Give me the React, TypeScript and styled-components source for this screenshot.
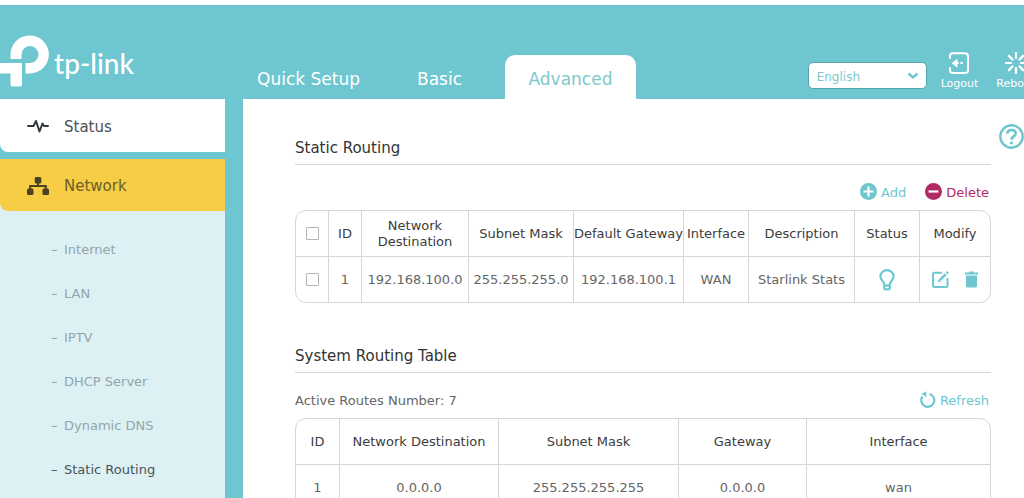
import React from "react";
import styled, { createGlobalStyle } from "styled-components";

const teal = "#6ec7d0";
const line = "#d6d6d6";

const GlobalStyle = createGlobalStyle`
  *, *::before, *::after { box-sizing: border-box; }
  html { overflow-x: hidden; scrollbar-width: none; }
  body {
    margin: 0;
    background: #fff;
    color: #666;
    font-family: "DejaVu Sans", Verdana, sans-serif;
    font-size: 13px;
    line-height: 16px;
  }
  button { font: inherit; color: inherit; background: none; border: 0; padding: 0; cursor: pointer; }
  a { color: inherit; text-decoration: none; }
  svg { display: block; flex: none; }
`;

const Shell = styled.div`
  display: flex;
  flex-direction: column;
  min-width: 1035px;
  min-height: 100vh;
  background: ${teal};
  border-top: 5px solid #fff;
`;

const Header = styled.header`
  display: flex;
  align-items: flex-end;
  height: 94px;
  color: #fff;
`;

const Brand = styled.a`
  display: flex;
  align-items: flex-start;
  width: 243px;
  height: 64px;
`;

const BrandName = styled.span`
  margin-left: 4px;
  padding-top: 12px;
  font-family: Lato, sans-serif;
  font-size: 28px;
  font-weight: 500;
  line-height: 32px;
`;

const Tabs = styled.nav`
  display: flex;
`;

const Tab = styled.a<{ $active?: boolean }>`
  width: 131px;
  height: 44px;
  padding-top: 2px;
  border-radius: 10px 10px 0 0;
  background: ${(p) => (p.$active ? "#fff" : "transparent")};
  color: ${(p) => (p.$active ? "#7dc8cb" : "#fff")};
  font-size: 17px;
  line-height: 44px;
  text-align: center;
  white-space: nowrap;
`;

const Tools = styled.div`
  display: flex;
  align-items: flex-end;
  margin-left: auto;
  padding-bottom: 7px;
`;

const Language = styled.label`
  position: relative;
  display: block;
  margin: 0 14px 3px 0;
  svg { position: absolute; right: 8px; top: 10px; pointer-events: none; }
`;

const Select = styled.select`
  display: block;
  appearance: none;
  width: 119px;
  height: 27px;
  padding: 2px 8px 0;
  border: 1px solid #55a5b0;
  border-radius: 5px;
  background: #fff;
  color: #7dc8cb;
  font: 12px "DejaVu Sans", Verdana, sans-serif;
`;

const Tool = styled.button`
  display: flex;
  flex-direction: column;
  align-items: center;
  gap: 2px;
  font-size: 11px;
  & + & { margin-left: 18px; }
`;

const Body = styled.div`
  display: flex;
  flex: 1;
  gap: 18px;
`;

const Sidebar = styled.nav`
  display: flex;
  flex-direction: column;
  width: 225px;
  flex: none;
`;

const NavItem = styled.a<{ $active?: boolean }>`
  display: flex;
  align-items: center;
  gap: 15px;
  height: ${(p) => (p.$active ? "52px" : "53px")};
  padding: 2px 0 0 27px;
  border-radius: 0 0 0 8px;
  background: ${(p) => (p.$active ? "#f6cd45" : "#fff")};
  color: ${(p) => (p.$active ? "#6a5e28" : "#4b5055")};
  font-size: 15px;
`;

const NavGroup = styled.div`
  flex: 1;
  margin-top: 7px;
  background: #ddf1f5;
`;

const SubList = styled.ul`
  margin: 0;
  padding: 17px 0 16px;
  list-style: none;
`;

const SubItem = styled.a<{ $active?: boolean }>`
  display: flex;
  gap: 6px;
  padding: 14px 0 14px 51px;
  color: ${(p) => (p.$active ? "#485459" : "#92a5aa")};
  &::before { content: "–"; width: 7px; }
`;

const Main = styled.main`
  display: flex;
  flex: 1;
  min-width: 0;
  align-items: flex-start;
  gap: 8px;
  padding: 0 11px 0 52px;
  background: #fff;
`;

const Content = styled.div`
  flex: 1;
  min-width: 0;
  padding-top: 36px;
`;

const Section = styled.section`
  margin-bottom: 40px;
`;

const Title = styled.h2`
  margin: 0;
  padding: 1px 0 4px;
  border-bottom: 1px solid ${line};
  color: #333;
  font-size: 15px;
  font-weight: 400;
  line-height: 24px;
`;

const Bar = styled.div`
  display: flex;
  align-items: center;
  height: 45px;
  padding: 10px 2px 0 0;
`;

const Actions = styled.div`
  display: flex;
  gap: 19px;
  margin-left: auto;
`;

const Action = styled.button<{ $danger?: boolean }>`
  display: flex;
  align-items: center;
  gap: 4px;
  color: ${(p) => (p.$danger ? "#b02a66" : teal)};
  svg { margin-bottom: 2px; }
`;

const Table = styled.table`
  width: 100%;
  table-layout: fixed;
  border-collapse: separate;
  border-spacing: 0;
  border: 1px solid ${line};
  border-radius: 11px;
  th, td {
    height: 46px;
    padding: 0;
    border-right: 1px solid ${line};
    text-align: center;
    font-weight: 400;
  }
  th { color: #3c3c3c; }
  th:last-child, td:last-child { border-right: 0; }
  thead th { border-bottom: 1px solid ${line}; }
  tbody td { height: 45px; }
`;

const NoWrap = styled.span`
  display: flex;
  justify-content: center;
  white-space: nowrap;
`;

const Check = styled.input`
  display: block;
  appearance: none;
  width: 13px;
  height: 13px;
  margin: 0 auto;
  border: 1px solid #b5b5b5;
  border-radius: 1px;
  background: #fff;
  &:checked { background: ${teal}; }
`;

const Icons = styled.div`
  display: flex;
  justify-content: center;
  align-items: center;
  gap: 16px;
  color: ${teal};
`;

const Help = styled.button`
  margin-top: 25px;
  color: ${teal};
`;

const LogoMark = () => (
  <svg width="50" height="52" viewBox="0 0 50 52" fill="#fff" aria-hidden="true">
    <path d="M10.5 24V20A19.200 19 0 1 1 29.500 38.500H25.500V28H29.500A8.500 8.500 0 1 0 21.500 19.500V24Z" />
    <path d="M0 28H22V50Q22 51.500 20.500 51.500H12Q10.500 51.500 10.500 50V38.500H0Z" />
  </svg>
);

const Pulse = () => (
  <svg width="22" height="16" viewBox="0 0 22 16" fill="none" stroke="#33383d" strokeWidth="2" strokeLinejoin="round" strokeLinecap="round" aria-hidden="true">
    <path d="M1 7H6.500L9 2L12.500 12.500L15.500 4.500L17 7H21" />
  </svg>
);

const NetworkIcon = () => (
  <svg width="22" height="18" viewBox="0 0 22 18" fill="#4a4220" aria-hidden="true">
    <rect x="7.700" y="0" width="6.600" height="6.500" rx="1.500" />
    <rect x="0" y="11.500" width="6.500" height="6.500" rx="1.500" />
    <rect x="15.500" y="11.500" width="6.500" height="6.500" rx="1.500" />
    <path d="M11 5V9M3.200 12V9H18.800V12" fill="none" stroke="#4a4220" strokeWidth="2" />
  </svg>
);

const LogoutIcon = () => (
  <svg width="22" height="22" viewBox="0 0 22 22" fill="none" stroke="#fff" strokeWidth="2" strokeLinecap="round" aria-hidden="true">
    <path d="M2 6V4Q2 1.200 4.800 1.200H17Q20 1.200 20 4.200V18Q20 21 17 21H4.800Q2 21 2 18V16" />
    <path d="M8 11H10M13.200 11H14" />
    <path d="M4.500 11L9 7.500V14.500Z" fill="#fff" strokeWidth="1" strokeLinejoin="round" />
  </svg>
);

const RebootIcon = () => (
  <svg width="22" height="22" viewBox="0 0 22 22" stroke="#fff" strokeWidth="2.200" strokeLinecap="round" aria-hidden="true">
    <path d="M11 1V6M11 16V21M1 11H6M16 11H21M3.900 3.900L7.500 7.500M14.500 14.500L18.100 18.100M3.900 18.100L7.500 14.500M14.500 7.500L18.100 3.900" />
  </svg>
);

const RoundIcon = ({ plus }: { plus?: boolean }) => (
  <svg width="17" height="17" viewBox="0 0 17 17" aria-hidden="true">
    <circle cx="8.500" cy="8.500" r="8.500" fill="currentColor" />
    <path d={plus ? "M3.500 8.500H13.500M8.500 3.500V13.500" : "M3.500 8.500H13.500"} stroke="#fff" strokeWidth="2.200" />
  </svg>
);

const RefreshIcon = () => (
  <svg width="16" height="17" viewBox="0 0 16 17" fill="none" stroke="currentColor" strokeWidth="2.200" aria-hidden="true">
    <path d="M9.500 3A6.500 6.500 0 1 1 2.500 5.500" />
    <path d="M1.200 3.200L6.300 0.200V6.500L4.500 4.500Z" fill="currentColor" stroke="none" />
  </svg>
);

const Bulb = () => (
  <svg width="16" height="22" viewBox="0 0 16 22" fill="none" stroke="currentColor" strokeWidth="2.200" aria-hidden="true">
    <path d="M5.200 15.500C5.200 12.500 1.400 11 1.400 7.400A6.600 6.200 0 0 1 14.600 7.400C14.600 11 10.800 12.500 10.800 15.500V18.500Q10.800 20.300 9.500 20.300H6.500Q5.200 20.300 5.200 18.500Z" />
    <path d="M5 16.500H11" />
  </svg>
);

const EditIcon = () => (
  <svg width="17" height="17" viewBox="0 0 17 17" fill="none" stroke="currentColor" strokeWidth="2" aria-hidden="true">
    <path d="M10 1.800H2.500Q1 1.800 1 3.300V14.500Q1 16 2.500 16H14Q15.500 16 15.500 14.500V7" />
    <path d="M7.800 9.200L13.800 3.200" strokeWidth="2.600" />
    <path d="M14.700 2.300L16 1" strokeWidth="2.600" />
    <path d="M5.800 11.300L6.600 8.200L8.900 10.500Z" fill="currentColor" stroke="none" />
  </svg>
);

const TrashIcon = () => (
  <svg width="13" height="17" viewBox="0 0 13 17" fill="currentColor" aria-hidden="true">
    <path d="M0 3.500V1.500H4L4.500 0.500H8.500L9 1.500H13V3.500Z" />
    <path d="M1 4.500H12V15Q12 16.500 10.500 16.500H2.500Q1 16.500 1 15Z" />
  </svg>
);

const HelpIcon = () => (
  <svg width="25" height="25" viewBox="0 0 25 25" fill="none" stroke="currentColor" aria-hidden="true">
    <circle cx="12.500" cy="12.500" r="11.200" strokeWidth="2.400" />
    <path d="M8.300 9.800Q8.300 6 12.500 6Q16.700 6 16.700 9.300Q16.700 11.300 14.500 12.500Q12.500 13.600 12.500 15.800" strokeWidth="2.600" />
    <circle cx="12.500" cy="19" r="1.600" fill="currentColor" stroke="none" />
  </svg>
);

const subItems = ["Internet", "LAN", "IPTV", "DHCP Server", "Dynamic DNS", "Static Routing"];
const routeWidths = [33, 33, 107, 105, 110, 65, 106, 65, 70];
const systemWidths = [44, 159, 180, 128, 183];

export default function App() {
  return (
    <>
      <GlobalStyle />
      <Shell>
        <Header>
          <Brand href="#home">
            <LogoMark />
            <BrandName>tp-link</BrandName>
          </Brand>
          <Tabs aria-label="Mode">
            <Tab href="#quick">Quick Setup</Tab>
            <Tab href="#basic">Basic</Tab>
            <Tab href="#advanced" $active aria-current="page">Advanced</Tab>
          </Tabs>
          <Tools>
            <Language>
              <Select aria-label="Language" defaultValue="English">
                <option>English</option>
              </Select>
              <svg width="12" height="8" viewBox="0 0 12 8" fill="none" stroke={teal} strokeWidth="2.400" aria-hidden="true">
                <path d="M1.500 1.500L6 5.500L10.500 1.500" />
              </svg>
            </Language>
            <Tool type="button"><LogoutIcon />Logout</Tool>
            <Tool type="button"><RebootIcon />Reboot</Tool>
          </Tools>
        </Header>
        <Body>
          <Sidebar aria-label="Settings">
            <NavItem href="#status"><Pulse />Status</NavItem>
            <NavGroup>
              <NavItem href="#network" $active><NetworkIcon />Network</NavItem>
              <SubList>
                {subItems.map((name) => (
                  <li key={name}>
                    <SubItem href={"#" + name} $active={name === "Static Routing"}>{name}</SubItem>
                  </li>
                ))}
              </SubList>
            </NavGroup>
          </Sidebar>
          <Main>
            <Content>
              <Section>
                <Title>Static Routing</Title>
                <Bar>
                  <Actions>
                    <Action type="button"><RoundIcon plus />Add</Action>
                    <Action type="button" $danger><RoundIcon />Delete</Action>
                  </Actions>
                </Bar>
                <Table>
                  <colgroup>{routeWidths.map((w, i) => <col key={i} width={w} />)}</colgroup>
                  <thead>
                    <tr>
                      <th><Check type="checkbox" aria-label="Select all routes" /></th>
                      <th>ID</th>
                      <th>Network Destination</th>
                      <th>Subnet Mask</th>
                      <th><NoWrap>Default Gateway</NoWrap></th>
                      <th>Interface</th>
                      <th>Description</th>
                      <th>Status</th>
                      <th>Modify</th>
                    </tr>
                  </thead>
                  <tbody>
                    <tr>
                      <td><Check type="checkbox" aria-label="Select route 1" /></td>
                      <td>1</td>
                      <td>192.168.100.0</td>
                      <td>255.255.255.0</td>
                      <td>192.168.100.1</td>
                      <td>WAN</td>
                      <td>Starlink Stats</td>
                      <td><Icons><button type="button" aria-label="Enabled"><Bulb /></button></Icons></td>
                      <td>
                        <Icons>
                          <button type="button" aria-label="Edit"><EditIcon /></button>
                          <button type="button" aria-label="Remove"><TrashIcon /></button>
                        </Icons>
                      </td>
                    </tr>
                  </tbody>
                </Table>
              </Section>
              <Section>
                <Title>System Routing Table</Title>
                <Bar>
                  <span>Active Routes Number: 7</span>
                  <Actions>
                    <Action type="button"><RefreshIcon />Refresh</Action>
                  </Actions>
                </Bar>
                <Table>
                  <colgroup>{systemWidths.map((w, i) => <col key={i} width={w} />)}</colgroup>
                  <thead>
                    <tr>
                      <th>ID</th>
                      <th>Network Destination</th>
                      <th>Subnet Mask</th>
                      <th>Gateway</th>
                      <th>Interface</th>
                    </tr>
                  </thead>
                  <tbody>
                    <tr>
                      <td>1</td>
                      <td>0.0.0.0</td>
                      <td>255.255.255.255</td>
                      <td>0.0.0.0</td>
                      <td>wan</td>
                    </tr>
                  </tbody>
                </Table>
              </Section>
            </Content>
            <Help type="button" aria-label="Help"><HelpIcon /></Help>
          </Main>
        </Body>
      </Shell>
    </>
  );
}
